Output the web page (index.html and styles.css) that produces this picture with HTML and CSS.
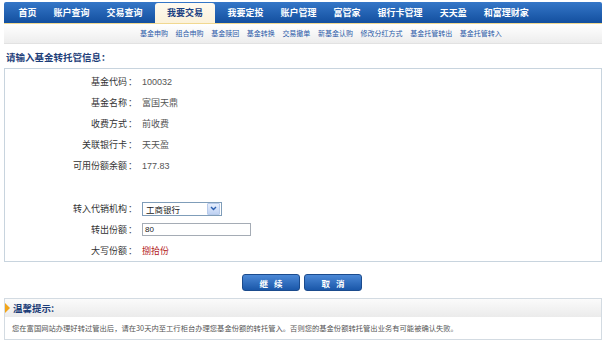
FILE: index.html
```html
<!DOCTYPE html>
<html lang="zh-CN">
  <head>
    <meta charset="UTF-8" />
    <title>基金托管转出</title>
    <link rel="stylesheet" href="styles.css">
  </head>
  <body>
    <div class="page">
      <div class="nav">
        <a>首页</a>
        <a>账户查询</a>
        <a>交易查询</a>
        <a class="on">我要交易</a>
        <a>我要定投</a>
        <a>账户管理</a>
        <a>富管家</a>
        <a>银行卡管理</a>
        <a>天天盈</a>
        <a>和富理财家</a>
      </div>

      <div class="subnav">
        <a>基金申购</a>
        <a>组合申购</a>
        <a>基金赎回</a>
        <a>基金转换</a>
        <a>交易撤单</a>
        <a>新基金认购</a>
        <a>修改分红方式</a>
        <a>基金托管转出</a>
        <a>基金托管转入</a>
      </div>

      <h2 class="title">请输入基金转托管信息：</h2>

      <div class="form-box">
        <div class="row">
          <span class="label">基金代码</span><span class="colon">：</span>
          <span class="value num">100032</span>
        </div>
        <div class="row">
          <span class="label">基金名称</span><span class="colon">：</span>
          <span class="value">富国天鼎</span>
        </div>
        <div class="row">
          <span class="label">收费方式</span><span class="colon">：</span>
          <span class="value">前收费</span>
        </div>
        <div class="row">
          <span class="label">关联银行卡</span><span class="colon">：</span>
          <span class="value">天天盈</span>
        </div>
        <div class="row">
          <span class="label">可用份额余额</span><span class="colon">：</span>
          <span class="value num">177.83</span>
        </div>
        <div class="row blank"></div>
        <div class="row">
          <span class="label">转入代销机构</span><span class="colon">：</span>
          <span class="value">
            <span class="select">
              <span class="select-text">工商银行</span>
              <span class="select-arrow">
                <svg width="7" height="5" viewBox="0 0 7 5"><path d="M1 1 L3.5 3.5 L6 1" fill="none" stroke="#2b5fb0" stroke-width="1.4"/></svg>
              </span>
            </span>
          </span>
        </div>
        <div class="row">
          <span class="label">转出份额</span><span class="colon">：</span>
          <span class="value"><span class="input">80</span></span>
        </div>
        <div class="row">
          <span class="label">大写份额</span><span class="colon">：</span>
          <span class="value red">捌拾份</span>
        </div>
      </div>

      <div class="actions">
        <button class="btn">继续</button>
        <button class="btn">取消</button>
      </div>

      <div class="tips">
        <div class="tips-head">温馨提示:</div>
        <div class="tips-body">您在富国网站办理好转过管出后，请在30天内至工行柜台办理您基金份额的转托管入。否则您的基金份额转托管出业务有可能被确认失败。</div>
      </div>
    </div>
  </body>
</html>
```

FILE: styles.css
```css
body {
  margin: 0;
  padding: 0;
  background-color: #fff;
  font-family: "Liberation Sans", "Noto Sans CJK SC", sans-serif;
  color: #333;
}

.page {
  width: 598px;
  margin: 0 0 0 4px;
}

/* top navigation */
.nav {
  display: flex;
  align-items: flex-end;
  height: 21px;
  margin-top: 2px;
  padding-left: 6px;
  background: linear-gradient(#3577c8, #134f9f);
  border-bottom: 1px solid #f1d890;
  border-radius: 2px 2px 0 0;
}

.nav a {
  padding: 0 8.5px;
  line-height: 21px;
  font-family: "Noto Sans CJK SC", sans-serif;
  font-size: 9px;
  font-weight: 700;
  color: #fff;
  white-space: nowrap;
}

.nav a.on {
  margin: 0 4px;
  padding: 0 12px;
  height: 20px;
  line-height: 19px;
  background: linear-gradient(#fffaf0, #fbf1d9);
  color: #1b3f82;
  border-radius: 3px 3px 0 0;
}

.subnav {
  display: flex;
  gap: 7.6px;
  height: 19px;
  padding-left: 136px;
  background: linear-gradient(#ffffff, #ededed);
  border-bottom: 1px solid #e2e2e2;
}

.subnav a {
  line-height: 19px;
  font-family: "Noto Sans CJK SC", sans-serif;
  font-size: 7px;
  color: #2a5aa8;
  white-space: nowrap;
}

.title {
  margin: 6px 0 4px 2px;
  line-height: 14px;
  font-family: "Noto Sans CJK SC", sans-serif;
  font-size: 9.5px;
  font-weight: 700;
  color: #1c3d78;
}

/* form */
.form-box {
  border: 1px solid #c8d4de;
  padding-top: 2px;
}

.row {
  display: grid;
  grid-template-columns: 122px 11px 1fr;
  align-items: center;
  height: 21px;
  font-size: 9px;
}

.row.blank {
  height: 22px;
}

.label {
  text-align: right;
  font-family: "Noto Sans CJK SC", sans-serif;
  color: #333;
}

.colon {
  font-family: "Noto Sans CJK SC", sans-serif;
  text-align: center;
  color: #444;
}

.value {
  padding-left: 4px;
  font-family: "Noto Sans CJK SC", sans-serif;
  color: #555;
}

.value.num {
  font-family: "Liberation Sans", sans-serif;
}

.value.red {
  color: #b3211c;
}

.select {
  display: flex;
  align-items: center;
  box-sizing: border-box;
  width: 80px;
  height: 14px;
  border: 1px solid #7f9db9;
  background-color: #fff;
}

.select-text {
  flex: 1;
  padding-left: 3px;
  font-size: 8.5px;
  color: #222;
}

.select-arrow {
  display: flex;
  align-items: center;
  justify-content: center;
  width: 11px;
  height: 10px;
  margin-right: 1px;
  background: linear-gradient(#e6eefc, #bfd2f3);
  border: 1px solid #b8cbeb;
  border-radius: 1px;
}

.input {
  display: block;
  box-sizing: border-box;
  width: 109px;
  height: 13px;
  padding-left: 2px;
  border: 1px solid #a5acb5;
  font-family: "Liberation Sans", sans-serif;
  font-size: 8px;
  line-height: 11px;
  color: #222;
}

/* buttons */
.actions {
  display: flex;
  justify-content: center;
  gap: 4px;
  margin-top: 12px;
  padding-right: 2px;
}

.btn {
  width: 58px;
  height: 17px;
  padding: 0 0 0 6px;
  background: linear-gradient(#4b88d6, #1a57a9);
  border: 1px solid #1b4b8d;
  border-radius: 3px;
  font-family: "Noto Sans CJK SC", sans-serif;
  font-size: 8.5px;
  font-weight: 700;
  letter-spacing: 6px;
  color: #fff;
  cursor: pointer;
}

/* tips */
.tips {
  margin-top: 7px;
  border: 1px solid #d3dbe2;
}

.tips-head {
  position: relative;
  height: 18px;
  padding-left: 8px;
  line-height: 18px;
  background: linear-gradient(#fbfbfb, #ebebeb);
  font-family: "Noto Sans CJK SC", sans-serif;
  font-size: 9.5px;
  font-weight: 700;
  color: #1c3d78;
}

.tips-head::before {
  content: "";
  position: absolute;
  left: 0;
  top: 4px;
  border-left: 5px solid #f2a51a;
  border-top: 5px solid transparent;
  border-bottom: 5px solid transparent;
}

.tips-body {
  padding-left: 7px;
  line-height: 22px;
  font-family: "Noto Sans CJK SC", sans-serif;
  font-size: 7.3px;
  color: #555;
}
```
